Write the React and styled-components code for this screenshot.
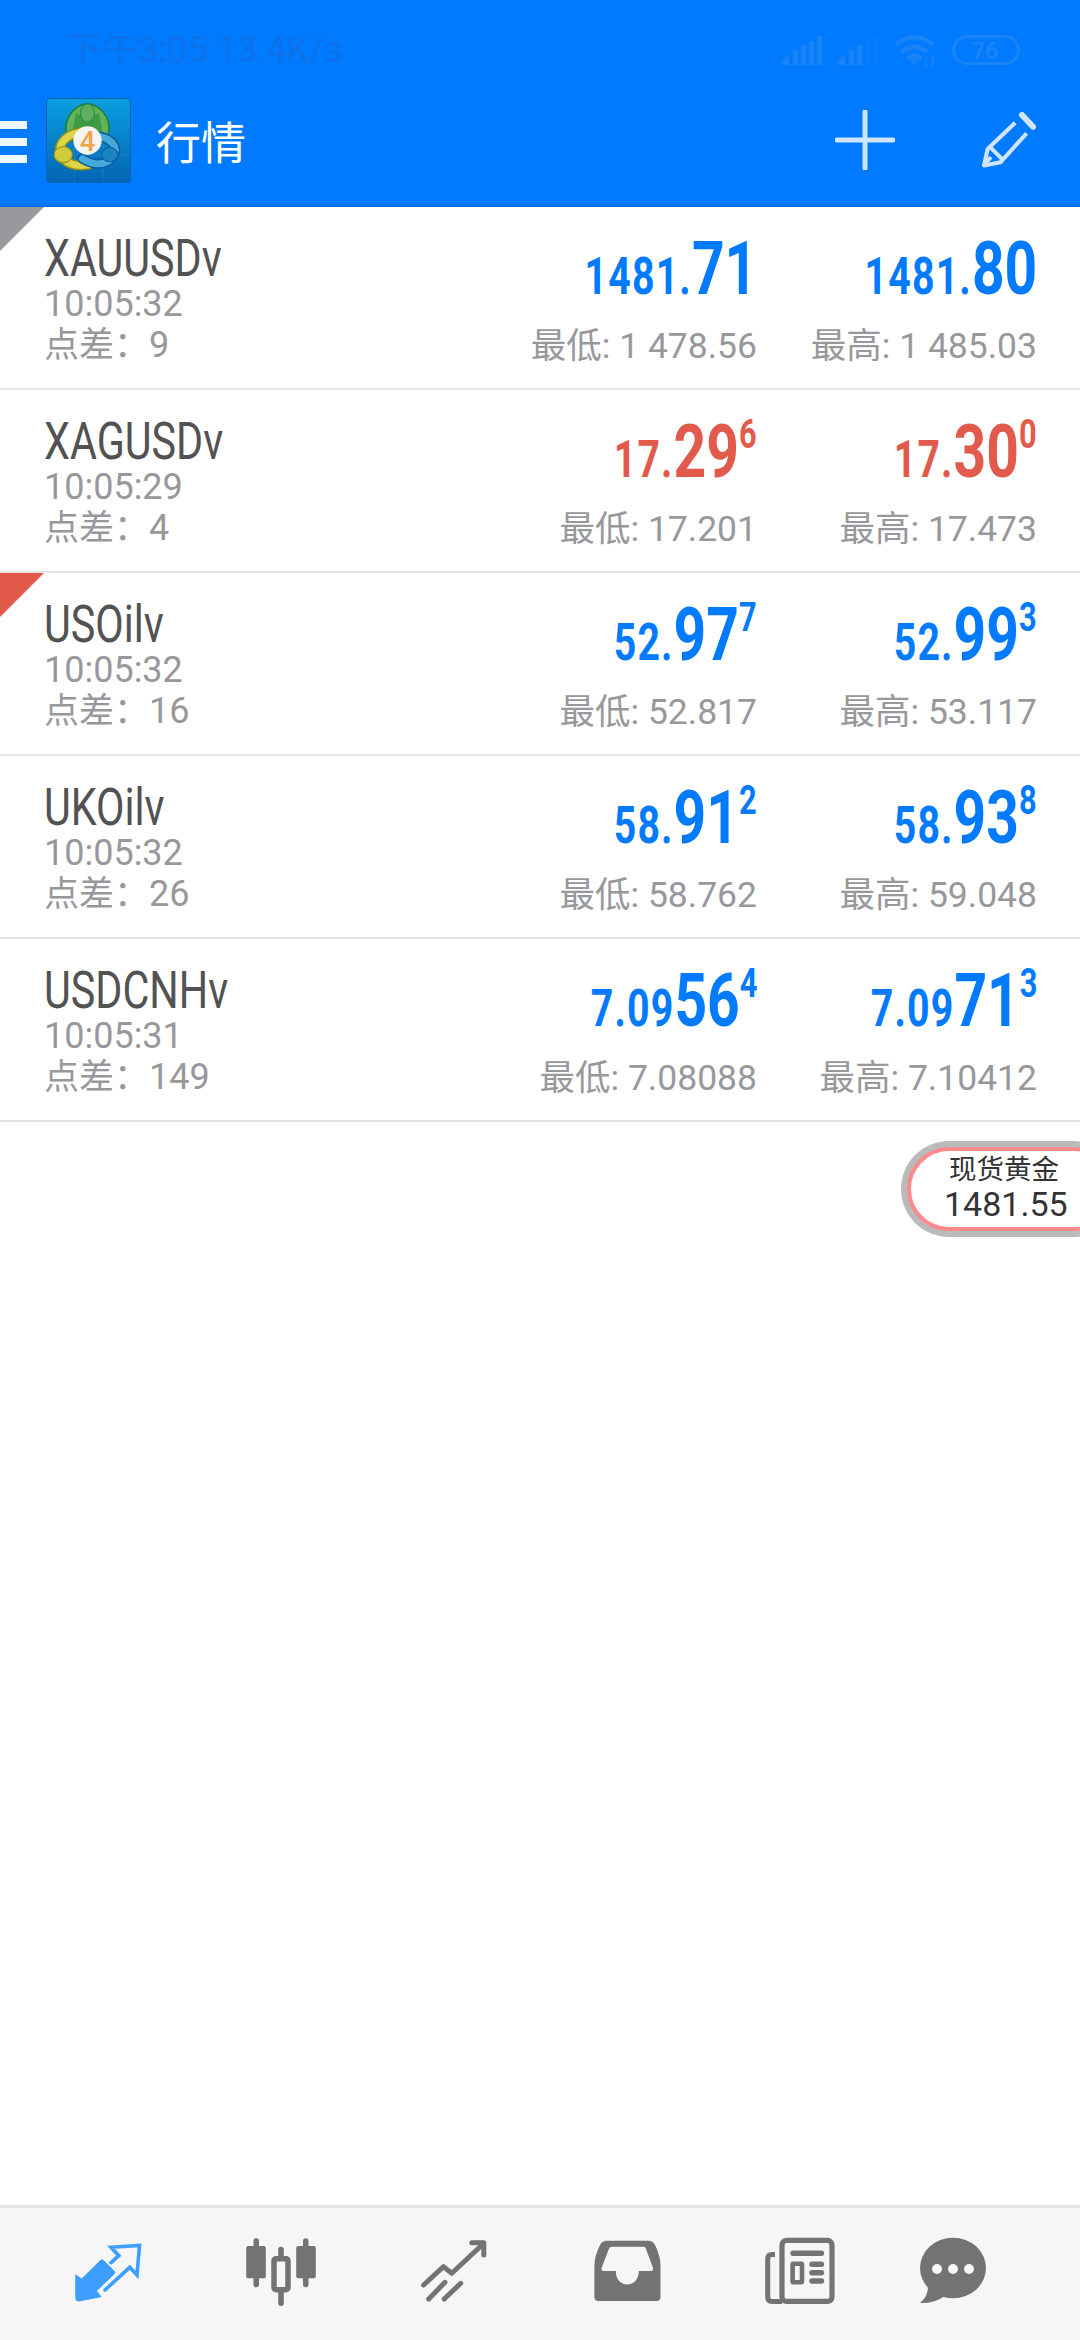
import React from "react";
import styled, { createGlobalStyle } from "styled-components";

const Global = createGlobalStyle`
  html, body { margin: 0; padding: 0; background: #fff; }
  body { width: 1080px; height: 2340px; overflow: hidden; font-family: Roboto, "Noto Sans CJK SC", sans-serif; }
  #root { width: 1080px; height: 2340px; }
`;

const Screen = styled.div`
  position: relative;
  width: 1080px;
  height: 2340px;
  overflow: hidden;
  display: flex;
  flex-direction: column;
  background: #fff;
`;

const Header = styled.header`
  box-sizing: border-box;
  height: 207px;
  background: #007aff;
  border-bottom: 2px solid #006fe8;
  display: flex;
  flex-direction: column;
`;

const StatusBar = styled.div`
  box-sizing: border-box;
  height: 75px;
  padding: 25px 60px 0 66px;
  display: flex;
  align-items: center;
  justify-content: space-between;
`;

const StatusText = styled.span`
  font: 400 36px Roboto, "Noto Sans CJK SC", sans-serif;
  color: #0d72e9;
  line-height: 50px;
  white-space: nowrap;
`;

const StatusIcons = styled.div`
  display: flex;
  align-items: center;
  gap: 16px;
`;

const Toolbar = styled.div`
  flex: 1;
  display: flex;
  align-items: center;
  padding-right: 40px;
`;

const Burger = styled.div`
  width: 27px;
  display: flex;
  flex-direction: column;
  gap: 9px;
  margin-top: 3px;
  span { display: block; height: 8px; background: #eef6ff; }
`;

const LogoWrap = styled.div`
  width: 85px;
  height: 85px;
  margin-left: 19px;
  svg { display: block; }
`;

const Title = styled.h1`
  margin: 0 0 0 25px;
  font: 400 45px "Noto Sans CJK SC", sans-serif;
  color: #fff;
`;

const Actions = styled.div`
  margin-left: auto;
  display: flex;
  align-items: center;
  gap: 85px;
  svg { display: block; }
`;

const List = styled.div`
  display: flex;
  flex-direction: column;
  flex: 1;
`;

const Row = styled.div`
  position: relative;
  box-sizing: border-box;
  height: 183px;
  border-bottom: 2px solid #e4e4e4;
  padding: 0 43px 0 44px;
  display: grid;
  grid-template-columns: 1fr 280px 280px;
`;

const Corner = styled.i`
  position: absolute;
  left: 0;
  top: 0;
  width: 44px;
  height: 44px;
  background: ${(p) => p.$color};
  clip-path: polygon(0 0, 100% 0, 0 100%);
`;

const Info = styled.div`
  display: flex;
  flex-direction: column;
  padding-top: 27px;
`;

const Name = styled.div`
  font: 400 51px/50px Roboto, sans-serif;
  color: #525252;
  transform: scaleX(0.81);
  transform-origin: left center;
  white-space: nowrap;
`;

const Meta = styled.div`
  font: 400 36px/41px Roboto, "Noto Sans CJK SC", sans-serif;
  color: #98989c;
  white-space: nowrap;
`;

const SpreadLabel = styled.span`
  font-size: 35px;
`;

const Quote = styled.div`
  display: flex;
  flex-direction: column;
  align-items: flex-end;
  padding-top: 26px;
`;

const Price = styled.div`
  height: 72px;
  line-height: 72px;
  font-family: Roboto, sans-serif;
  font-weight: 700;
  color: ${(p) => p.$color};
  white-space: nowrap;
  transform: scaleX(0.77);
  transform-origin: right center;
`;

const Small = styled.span`
  font-size: 51px;
  letter-spacing: 1.5px;
`;
const Big = styled.span`font-size: 74px;`;
const Sup = styled.span`
  font-size: 40px;
  font-weight: 700;
  vertical-align: 29px;
  line-height: 0;
`;

const Range = styled.div`
  margin-top: 21px;
  font: 400 35.5px/41px Roboto, "Noto Sans CJK SC", sans-serif;
  color: #98989c;
  white-space: nowrap;
`;

const FloatBox = styled.div`
  position: absolute;
  left: 901px;
  top: 1141px;
  box-sizing: border-box;
  width: 220px;
  height: 96px;
  border-radius: 48px;
  background: #bababa;
  padding: 6px;
`;

const FloatInner = styled.div`
  box-sizing: border-box;
  height: 84px;
  border-radius: 42px;
  background: #fff;
  border: 4px solid #ff8a8d;
  padding-left: 33px;
  display: flex;
  flex-direction: column;
  color: #333;
  white-space: nowrap;
`;

const FloatName = styled.div`
  font: 400 27.5px/32px "Noto Sans CJK SC", sans-serif;
  padding-left: 5px;
`;

const FloatValue = styled.div`
  font: 400 34px/42px Roboto, sans-serif;
`;

const TabBar = styled.nav`
  box-sizing: border-box;
  height: 135px;
  background: #f6f6f6;
  border-top: 3px solid #e5e5e5;
  padding-left: 21.5px;
  display: grid;
  grid-template-columns: repeat(5, 173px) 133px;
  align-items: center;
`;

const Tab = styled.div`
  display: flex;
  justify-content: center;
  margin-bottom: 4px;
  svg { display: block; }
`;

const Logo = () => (
  <svg width="85" height="85" viewBox="0 0 84 84">
    <defs>
      <linearGradient id="lbg" x1="0" y1="0" x2="0" y2="1">
        <stop offset="0" stopColor="#0a9fdf" />
        <stop offset="1" stopColor="#0564b4" />
      </linearGradient>
    </defs>
    <rect x="0.5" y="0.5" width="83" height="83" rx="4" fill="url(#lbg)" stroke="#0565b0" />
    <path d="M0 28H84M0 56H84M28 0V84M56 0V84" stroke="#2aa6e0" strokeOpacity="0.3" />
    <g fill="none" strokeLinecap="round">
      <path d="M26 38C20 26 28 12 41 10C54 12 62 26 56 38" stroke="#1f7d36" strokeWidth="10" />
      <path d="M26 38C20 26 28 12 41 10C54 12 62 26 56 38" stroke="#62b35a" strokeWidth="7" />
    </g>
    <path d="M30 14Q41 30 52 14L56 34H26Z" fill="#3f9a44" />
    <ellipse cx="41" cy="15" rx="7" ry="9" fill="#5fae60" stroke="#2b8a3e" />
    <g fill="none" strokeLinecap="round">
      <path d="M38 34C22 34 12 44 14 54C18 66 30 68 42 66" stroke="#8d8f18" strokeWidth="10" />
      <path d="M38 34C22 34 12 44 14 54C18 66 30 68 42 66" stroke="#dbd547" strokeWidth="7" />
      <path d="M52 38C66 40 72 50 66 58C58 68 46 66 36 60" stroke="#0a5c9c" strokeWidth="10" />
      <path d="M52 38C66 40 72 50 66 58C58 68 46 66 36 60" stroke="#45a9dc" strokeWidth="7" />
    </g>
    <ellipse cx="17" cy="56" rx="9" ry="8" fill="#cfcb3c" stroke="#8d8f18" />
    <ellipse cx="63" cy="56" rx="8" ry="7" fill="#1c84c0" stroke="#0a5c9c" />
    <circle cx="41" cy="42" r="14" fill="#f4f4f2" />
    <text x="41" y="52" textAnchor="middle" fontFamily="Roboto, sans-serif" fontWeight="500" fontSize="27" fill="#f2a345">4</text>
  </svg>
);

const Signal = ({ bars }) => (
  <svg width="40" height="30" viewBox="0 0 40 30">
    <g fill="#1a84f6">
      <path d="M0 30V25L7 19V30Z" opacity={bars > 0 ? 1 : 0.3} />
      <rect x="11" y="15" width="5" height="15" opacity={bars > 1 ? 1 : 0.3} />
      <rect x="19" y="10" width="5" height="20" opacity={bars > 2 ? 1 : 0.3} />
      <rect x="27" y="6" width="5" height="24" opacity={bars > 3 ? 1 : 0.3} />
      <rect x="35" y="1" width="5" height="29" opacity={bars > 4 ? 1 : 0.3} />
    </g>
  </svg>
);

const Wifi = () => (
  <svg width="42" height="34" viewBox="0 0 44 34" style={{ marginTop: 4 }}>
    <g fill="none" stroke="#1a84f6" strokeWidth="4.5">
      <path d="M2 9Q21 -6 41 9" />
      <path d="M8 17Q21 6 35 17" />
      <path d="M14 24Q21 18 29 24" />
    </g>
    <path d="M21 30L16 25Q21 22 26 25Z" fill="#1a84f6" />
    <path d="M34 22V33M31 31L34 33M40 33V22L43 26" fill="none" stroke="#1a84f6" strokeWidth="1.8" />
  </svg>
);

const Battery = () => (
  <svg width="68" height="30" viewBox="0 0 68 30">
    <rect x="1.5" y="1.5" width="65" height="27" rx="13.5" fill="none" stroke="#1a84f6" strokeWidth="3" />
    <text x="33" y="24" textAnchor="middle" fontFamily="Roboto, sans-serif" fontWeight="700" fontSize="23" fill="#1a84f6">76</text>
  </svg>
);

const PlusIcon = () => (
  <svg width="60" height="60" viewBox="0 0 60 60">
    <path d="M30 2V58M2 30H58" stroke="#cfe4ff" strokeWidth="5" strokeLinecap="round" />
  </svg>
);

const PencilIcon = () => (
  <svg width="60" height="60" viewBox="0 0 60 60" fill="none" stroke="#cfe4ff" strokeLinejoin="round">
    <path d="M42 5L53 16.7" strokeWidth="6" strokeLinecap="round" />
    <path d="M35.2 12.7L7.6 39L4 55.5L20.4 52.3L46.6 23.3" strokeWidth="4" />
    <path d="M10 37L22 49M5 54L11 47" strokeWidth="4" />
  </svg>
);

const TradeIcon = () => (
  <svg width="72" height="72" viewBox="0 0 72 72">
    <path d="M3.8 39L9.6 43L28.5 24.5Q30 23 31.5 24.5L42 35Q43.5 36.5 42 38L24.4 55L29 60.7L6.5 65Q3.8 65 3.8 62Z" fill="#3d9eff" stroke="#3d9eff" strokeLinejoin="round" />
    <path d="M33 54L57.8 31.3L65 39L67.5 9.5L39 11.3L46.8 19.7L39 26.7" fill="none" stroke="#3d9eff" strokeWidth="3.6" strokeLinecap="round" />
  </svg>
);

const CandleIcon = () => (
  <svg width="72" height="72" viewBox="0 0 72 72" fill="#737373">
    <rect x="8.5" y="2.3" width="5.5" height="49" rx="2.7" />
    <rect x="1.2" y="10" width="19.6" height="32.3" rx="2" />
    <rect x="58" y="2.3" width="5.5" height="49" rx="2.7" />
    <rect x="51.2" y="10" width="19.6" height="32.3" rx="2" />
    <rect x="33.2" y="10.7" width="5.6" height="59.3" rx="2.7" />
    <rect x="29" y="22.7" width="14" height="31" rx="2" fill="#f6f6f6" stroke="#737373" strokeWidth="5.5" />
  </svg>
);

const ChartIcon = () => (
  <svg width="72" height="72" viewBox="0 0 72 72" fill="none" stroke="#737373" strokeWidth="5" strokeLinecap="round" strokeLinejoin="round">
    <path d="M5.6 49L25.5 30.7L33.8 37.3L64 9" />
    <path d="M53.8 6.7H65.8V19" />
    <path d="M10.7 63L27 46.3M26.2 63L42.7 47.3" />
  </svg>
);

const InboxIcon = () => (
  <svg width="72" height="72" viewBox="0 0 72 72">
    <path
      fillRule="evenodd"
      fill="#737373"
      d="M15 4.7H58Q62 5 64 9Q69.5 20 69.5 30V61Q69.5 65 65.5 65H7.5Q3.4 65 3.4 61V30Q3.4 20 9 9Q11 5 15 4.7ZM21 10.7Q18.5 10.7 17.5 14L10.5 32Q10 35 12.5 35H24.8C24.8 53 47.8 53 47.8 35H60Q62.5 35 62 32L55 13Q54.5 10.7 52.5 10.7Z"
    />
  </svg>
);

const NewsIcon = () => (
  <svg width="72" height="72" viewBox="0 0 72 72" fill="none" stroke="#737373">
    <rect x="18" y="4.4" width="50" height="61" rx="4.5" strokeWidth="5.2" />
    <path d="M11 18.5H8Q3.7 18.5 3.7 23V61Q3.7 65.5 8 65.5H18" strokeWidth="5" />
    <g strokeWidth="5.4" strokeLinecap="round">
      <path d="M29 17.3H57.5M48 28.3H57.5M48 36.7H57.5M48 45H57.5" />
    </g>
    <rect x="28.6" y="27.8" width="9.4" height="18.4" rx="1" strokeWidth="4.6" />
  </svg>
);

const ChatIcon = () => (
  <svg width="72" height="72" viewBox="0 0 72 72">
    <ellipse cx="36" cy="32" rx="33" ry="30.3" fill="#737373" />
    <path d="M11 48Q12 60 3 67Q16 68 28 60Z" fill="#737373" />
    <g fill="#f6f6f6">
      <circle cx="20" cy="33" r="5" />
      <circle cx="36" cy="33" r="5" />
      <circle cx="52" cy="33" r="5" />
    </g>
  </svg>
);

const BLUE = "#007aff";
const RED = "#e25a4b";

const rows = [
  { name: "XAUUSDv", time: "10:05:32", spread: "9", color: BLUE, corner: "#98989c", bid: ["1481.", "71", ""], ask: ["1481.", "80", ""], low: "1 478.56", high: "1 485.03" },
  { name: "XAGUSDv", time: "10:05:29", spread: "4", color: RED, bid: ["17.", "29", "6"], ask: ["17.", "30", "0"], low: "17.201", high: "17.473" },
  { name: "USOilv", time: "10:05:32", spread: "16", color: BLUE, corner: RED, bid: ["52.", "97", "7"], ask: ["52.", "99", "3"], low: "52.817", high: "53.117" },
  { name: "UKOilv", time: "10:05:32", spread: "26", color: BLUE, bid: ["58.", "91", "2"], ask: ["58.", "93", "8"], low: "58.762", high: "59.048" },
  { name: "USDCNHv", time: "10:05:31", spread: "149", color: BLUE, bid: ["7.09", "56", "4"], ask: ["7.09", "71", "3"], low: "7.08088", high: "7.10412" },
];

const PriceText = ({ parts, color }) => (
  <Price $color={color}>
    <Small>{parts[0]}</Small>
    <Big>{parts[1]}</Big>
    {parts[2] && <Sup>{parts[2]}</Sup>}
  </Price>
);

export default function App() {
  return (
    <Screen>
      <Global />
      <Header>
        <StatusBar>
          <StatusText>下午3:05 13.4K/s</StatusText>
          <StatusIcons>
            <Signal bars={5} />
            <Signal bars={3} />
            <Wifi />
            <Battery />
          </StatusIcons>
        </StatusBar>
        <Toolbar>
          <Burger><span /><span /><span /></Burger>
          <LogoWrap><Logo /></LogoWrap>
          <Title>行情</Title>
          <Actions>
            <PlusIcon />
            <PencilIcon />
          </Actions>
        </Toolbar>
      </Header>
      <List>
        {rows.map((r) => (
          <Row key={r.name}>
            {r.corner && <Corner $color={r.corner} />}
            <Info>
              <Name>{r.name}</Name>
              <Meta>{r.time}</Meta>
              <Meta><SpreadLabel>点差：</SpreadLabel>{r.spread}</Meta>
            </Info>
            <Quote>
              <PriceText parts={r.bid} color={r.color} />
              <Range>最低: {r.low}</Range>
            </Quote>
            <Quote>
              <PriceText parts={r.ask} color={r.color} />
              <Range>最高: {r.high}</Range>
            </Quote>
          </Row>
        ))}
      </List>
      <FloatBox>
        <FloatInner>
          <FloatName>现货黄金</FloatName>
          <FloatValue>1481.55</FloatValue>
        </FloatInner>
      </FloatBox>
      <TabBar>
        <Tab><TradeIcon /></Tab>
        <Tab><CandleIcon /></Tab>
        <Tab><ChartIcon /></Tab>
        <Tab><InboxIcon /></Tab>
        <Tab><NewsIcon /></Tab>
        <Tab><ChatIcon /></Tab>
      </TabBar>
    </Screen>
  );
}
